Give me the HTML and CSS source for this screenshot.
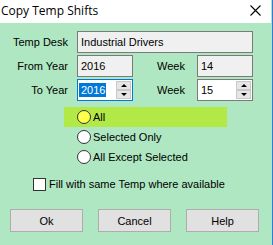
FILE: index.html
```html
<!DOCTYPE html>
<html>
<head>
<meta charset="utf-8">
<link rel="stylesheet" href="styles.css">
</head>
<body>
<div class="dialog">
  <div class="titlebar">
    <span class="title">Copy Temp Shifts</span>
    <svg class="close" width="11" height="11" viewBox="0 0 11 11"><path d="M0.5 0.5 L10.5 10.5 M10.5 0.5 L0.5 10.5" stroke="#000" stroke-width="1.1" fill="none"/></svg>
  </div>
  <div class="content">
    <div class="form">
      <label class="lbl">Temp Desk</label>
      <div class="field ro wide">Industrial Drivers</div>

      <label class="lbl">From Year</label>
      <div class="field ro">2016</div>
      <label class="lbl2">Week</label>
      <div class="field ro">14</div>

      <label class="lbl">To Year</label>
      <div class="field focus spin"><span class="sel">2016</span><span class="spinner"><span class="up"></span><span class="down"></span></span></div>
      <label class="lbl2">Week</label>
      <div class="field spin">15<span class="spinner"><span class="up"></span><span class="down"></span></span></div>
    </div>

    <div class="radios">
      <div class="radio hl"><span class="dot on"></span>All</div>
      <div class="radio"><span class="dot"></span>Selected Only</div>
      <div class="radio"><span class="dot"></span>All Except Selected</div>
    </div>

    <div class="check"><span class="box"></span>Fill with same Temp where available</div>

    <div class="buttons">
      <button class="btn">Ok</button>
      <button class="btn">Cancel</button>
      <button class="btn">Help</button>
    </div>
  </div>
</div>
</body>
</html>
```

FILE: styles.css
```css
html, body {
  margin: 0;
  padding: 0;
}
body {
  width: 273px;
  height: 245px;
  overflow: hidden;
  font-family: "Liberation Sans", Arial, sans-serif;
  font-size: 11px;
  color: #000;
}
.dialog {
  width: 272px;
  height: 245px;
  border-right: 1px solid #2a7fd5;
  background: #aee7c1;
  display: flex;
  flex-direction: column;
}
.titlebar {
  height: 23px;
  background: #fff;
  display: flex;
  align-items: center;
  justify-content: space-between;
  padding: 0 10px 0 1px;
  margin-right: 1px;
}
.title {
  font-family: "Open Sans", "Noto Sans", sans-serif;
  font-size: 12px;
  color: #000;
  margin-top: -3px;
}
.close {
  margin-top: -3px;
}
.content {
  flex: 1;
  display: flex;
  flex-direction: column;
}
.form {
  display: grid;
  grid-template-columns: 77px 56px 64px 56px;
  grid-auto-rows: 22px;
  row-gap: 2px;
  padding-top: 8px;
}
.lbl {
  text-align: right;
  padding-right: 9px;
  line-height: 22px;
}
.lbl2 {
  padding-left: 24px;
  line-height: 22px;
}
.field {
  box-sizing: border-box;
  height: 22px;
  border: 1px solid #7a7a7a;
  background: #fff;
  padding-left: 3px;
  line-height: 20px;
  position: relative;
}
.field.ro {
  background: #f0f0f0;
}
.field.wide {
  grid-column: 2 / 5;
}
.field.focus {
  border-color: #0078d7;
}
.sel {
  background: #0078d7;
  color: #fff;
  padding: 1px 1px 1px 0;
  margin-left: -2px;
  padding-left: 2px;
}
.spinner {
  position: absolute;
  right: 1px;
  top: 1px;
  width: 15px;
  height: 18px;
  display: flex;
  flex-direction: column;
  gap: 0;
}
.spinner .up, .spinner .down {
  flex: 1;
  background: #e6e6e6;
  border: 1px solid #c8c8c8;
  position: relative;
}
.spinner .up::after, .spinner .down::after {
  content: "";
  position: absolute;
  left: 4px;
  width: 0;
  height: 0;
  border-left: 3px solid transparent;
  border-right: 3px solid transparent;
}
.spinner .up::after {
  top: 2px;
  border-bottom: 3px solid #000;
}
.spinner .down::after {
  top: 2px;
  border-top: 3px solid #000;
}
.radios {
  display: flex;
  flex-direction: column;
  margin-top: 6px;
  padding-left: 64px;
}
.radio {
  height: 20px;
  width: 163px;
  display: flex;
  align-items: center;
  padding-left: 13px;
  box-sizing: border-box;
}
.radio.hl {
  background: #b3e947;
}
.dot {
  box-sizing: border-box;
  width: 14px;
  height: 14px;
  border-radius: 50%;
  border: 1px solid #333;
  background: #fff;
  margin-right: 2px;
}
.dot.on {
  background: #ffff4d;
}
.check {
  display: flex;
  align-items: center;
  height: 18px;
  margin-top: 8px;
  padding-left: 33px;
}
.box {
  box-sizing: border-box;
  width: 13px;
  height: 13px;
  border: 1px solid #333;
  background: #fff;
  margin-right: 3px;
}
.buttons {
  display: flex;
  gap: 15px;
  padding-left: 10px;
  margin-top: 16px;
}
.btn {
  width: 73px;
  height: 23px;
  box-sizing: border-box;
  background: #e1e1e1;
  border: 1px solid #adadad;
  font-family: "Liberation Sans", Arial, sans-serif;
  font-size: 11px;
  color: #000;
  padding: 0;
}
```
